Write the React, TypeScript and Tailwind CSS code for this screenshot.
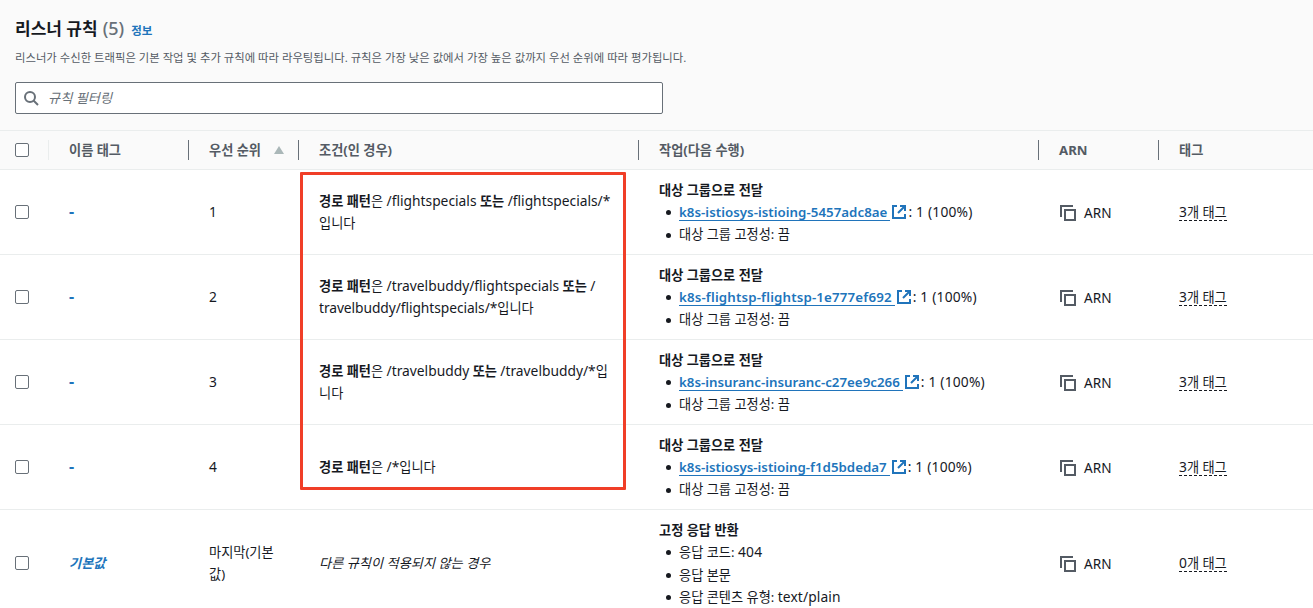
import React from "react";

type LatinProps = { children: React.ReactNode; className?: string };

function Latin({ children, className = "" }: LatinProps) {
  return <span className={`text-[13.8px] leading-none ${className}`}>{children}</span>;
}

function Checkbox() {
  return (
    <button
      type="button"
      role="checkbox"
      aria-checked="false"
      className="block size-[14px] shrink-0 rounded-[2px] border border-[#687078] bg-white"
    />
  );
}

function ExternalIcon() {
  return (
    <svg viewBox="0 0 16 16" className="ml-px block size-4 shrink-0" fill="none" stroke="#2074bb" strokeWidth="2">
      <path d="M6 2H2v12h12v-4" />
      <path d="M9 2h5v5M14 2L7 9" />
    </svg>
  );
}

function CopyIcon() {
  return (
    <svg viewBox="0 0 16 16" className="block size-4 shrink-0" fill="none" stroke="#545b64" strokeWidth="2">
      <path d="M1 12V1h12" />
      <path d="M5 5h10v10H5z" />
    </svg>
  );
}

const columns = "grid grid-cols-[49px_140px_110px_340px_400px_120px_1fr]";

function HeaderCell({ children, last }: { children: React.ReactNode; last?: boolean }) {
  return (
    <div
      className={`flex h-5 items-center justify-between pb-px pl-5 pr-[14px] leading-[18px] ${
        last ? "" : "border-r border-[#687078]"
      }`}
    >
      {children}
    </div>
  );
}

type Rule = {
  name: React.ReactNode;
  priority: React.ReactNode;
  condition: React.ReactNode;
  title: string;
  actions: React.ReactNode[];
  tags: string;
};

function target(name: string, spacing: string): React.ReactNode[] {
  return [
    <span className="flex items-center" key="t">
      <a className={`block h-[18px] border-b border-[#2074bb] pr-[3px] text-[13.3px] font-semibold leading-[18px] text-[#2074bb] ${spacing}`}>
        {name}
      </a>
      <ExternalIcon />
      <Latin className="ml-px tracking-[0.2px]">: 1 (100%)</Latin>
    </span>,
    <span className="pb-px" key="s">대상 그룹 고정성: 끔</span>,
  ];
}

const rules: Rule[] = [
  {
    name: "-",
    priority: "1",
    condition: (
      <>
        <b>경로 패턴</b>은 <Latin>/flightspecials</Latin> <b>또는</b> <Latin>/flightspecials/*</Latin>
        <br />
        입니다
      </>
    ),
    title: "대상 그룹으로 전달",
    actions: target("k8s-istiosys-istioing-5457adc8ae", "tracking-[0.03px]"),
    tags: "3개 태그",
  },
  {
    name: "-",
    priority: "2",
    condition: (
      <>
        <b>경로 패턴</b>은 <Latin>/travelbuddy/flightspecials</Latin> <b>또는</b> <Latin>/</Latin>
        <br />
        <Latin className="tracking-[-0.07px]">travelbuddy/flightspecials/*</Latin>입니다
      </>
    ),
    title: "대상 그룹으로 전달",
    actions: target("k8s-flightsp-flightsp-1e777ef692", "tracking-[0.16px]"),
    tags: "3개 태그",
  },
  {
    name: "-",
    priority: "3",
    condition: (
      <>
        <b>경로 패턴</b>은 <Latin>/travelbuddy</Latin> <b>또는</b> <Latin>/travelbuddy/*</Latin>입<br />
        니다
      </>
    ),
    title: "대상 그룹으로 전달",
    actions: target("k8s-insuranc-insuranc-c27ee9c266", ""),
    tags: "3개 태그",
  },
  {
    name: "-",
    priority: "4",
    condition: (
      <>
        <b>경로 패턴</b>은 <Latin>/*</Latin>입니다
      </>
    ),
    title: "대상 그룹으로 전달",
    actions: target("k8s-istiosys-istioing-f1d5bdeda7", ""),
    tags: "3개 태그",
  },
  {
    name: <i>기본값</i>,
    priority: (
      <>
        마지막(기본
        <br />
        값)
      </>
    ),
    condition: <i>다른 규칙이 적용되지 않는 경우</i>,
    title: "고정 응답 반환",
    actions: [
      <span key="code">
        응답 코드: <Latin className="tracking-[0.3px]">404</Latin>
      </span>,
      "응답 본문",
      <span key="type">
        응답 콘텐츠 유형: <Latin className="tracking-[0.1px]">text/plain</Latin>
      </span>,
    ],
    tags: "0개 태그",
  },
];

function Row({ rule, last }: { rule: Rule; last: boolean }) {
  return (
    <div className={`${columns} shrink-0 items-center ${last ? "h-[106px]" : "h-[85px] border-b border-[#eaeded]"}`}>
      <div className="pl-[15px]">
        <Checkbox />
      </div>
      <div className="pl-5 font-bold text-[#2074bb]">
        {last ? rule.name : <span className="text-[16px] leading-none">{rule.name}</span>}
      </div>
      <div className="pb-px pl-5">{last ? rule.priority : <Latin>{rule.priority}</Latin>}</div>
      <div className="pb-px pl-5">{rule.condition}</div>
      <div className="self-start pl-5 pt-2">
        <div className="h-[23px] font-bold leading-[24px]">{rule.title}</div>
        <ul>
          {rule.actions.map((action, i) => (
            <li key={i} className="flex h-[22.5px] items-center">
              <span className="ml-[7px] mr-2 mt-px size-[5px] rounded-full bg-[#16191f]" />
              {action}
            </li>
          ))}
        </ul>
      </div>
      <div className="flex items-center gap-[8px] pl-[21px] pt-px">
        <CopyIcon />
        <span className="text-[13.6px]">ARN</span>
      </div>
      <div className="pl-5">
        <span className="inline-block h-[17px] border-b border-dashed border-[#16191f] leading-[16px]">
          <Latin>{rule.tags.slice(0, 1)}</Latin>
          {rule.tags.slice(1)}
        </span>
      </div>
    </div>
  );
}

export default function App() {
  return (
    <main className="relative flex h-[608px] w-full flex-col overflow-hidden bg-white font-['Noto_Sans','Noto_Sans_CJK_KR',sans-serif] text-[13.2px] leading-[22px] whitespace-nowrap text-[#16191f]">
      <header className="h-[130px] shrink-0 bg-[#fafafa] pl-[15px] pt-4">
        <div className="flex h-6 items-baseline">
          <h1 className="text-[17px] font-bold leading-6">리스너 규칙</h1>
          <span className="ml-[5px] text-[18px] font-medium leading-6 text-[#687078]">(5)</span>
          <a className="ml-[7px] text-[11.5px] font-bold leading-6 text-[#2074bb]">정보</a>
        </div>
        <p className="mt-[9px] h-[18px] text-[11.36px] leading-[18px] text-[#545b64]">
          리스너가 수신한 트래픽은 기본 작업 및 추가 규칙에 따라 라우팅됩니다. 규칙은 가장 낮은 값에서 가장 높은 값까지 우선 순위에 따라 평가됩니다.
        </p>
        <div className="mt-[15px] flex h-8 w-[648px] items-center rounded-[2px] border border-[#687078] bg-white pl-[7px]">
          <svg viewBox="0 0 16 16" className="size-4" fill="none" stroke="#687078" strokeWidth="2">
            <circle cx="7" cy="7" r="5" />
            <path d="M10.5 10.5l4.5 4.5" />
          </svg>
          <span className="ml-[9px] italic text-[#687078]">규칙 필터링</span>
        </div>
      </header>

      <div className={`${columns} h-10 shrink-0 items-center border-y border-[#eaeded] bg-[#fafafa] font-bold text-[#545b64]`}>
        <div className="flex h-5 items-center border-r border-[#eaeded] pl-[15px]">
          <Checkbox />
        </div>
        <HeaderCell>이름 태그</HeaderCell>
        <HeaderCell>
          우선 순위
          <svg viewBox="0 0 10 8" className="h-2 w-[10px]">
            <path d="M5 0l5 8H0z" fill="#aab7b8" />
          </svg>
        </HeaderCell>
        <HeaderCell>조건(인 경우)</HeaderCell>
        <HeaderCell>작업(다음 수행)</HeaderCell>
        <HeaderCell>ARN</HeaderCell>
        <HeaderCell last>태그</HeaderCell>
      </div>

      {rules.map((rule, i) => (
        <Row key={i} rule={rule} last={i === rules.length - 1} />
      ))}

      <div className="pointer-events-none absolute left-[300px] top-[172px] h-[318px] w-[326px] rounded-[1px] border-3 border-[#f03e27]" />
    </main>
  );
}
